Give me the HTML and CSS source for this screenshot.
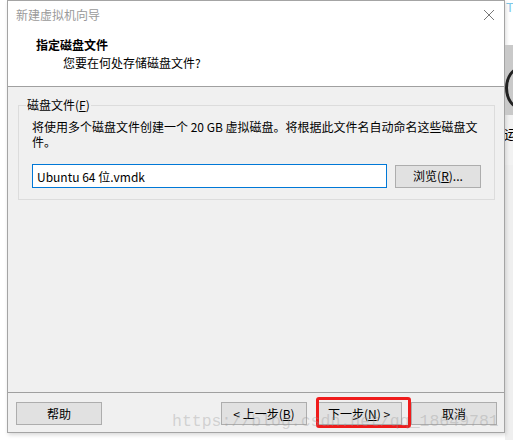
FILE: index.html
```html
<!DOCTYPE html>
<html lang="zh-CN">
<head>
    <meta charset="UTF-8">
    <title>新建虚拟机向导</title>
    <link rel="stylesheet" href="styles.css">
</head>
<body>
    <div class="wizard">
        <div class="title-bar">
            <span class="title-text">新建虚拟机向导</span>
            <svg class="close-icon" width="12" height="12" viewBox="0 0 12 12">
                <path d="M1 1 L11 11 M11 1 L1 11" stroke="#777" stroke-width="1" fill="none"/>
            </svg>
        </div>
        <div class="wizard-header">
            <div class="header-title">指定磁盘文件</div>
            <div class="header-sub">您要在何处存储磁盘文件?</div>
        </div>

        <div class="wizard-body">
            <fieldset class="group">
                <legend>磁盘文件(<u>F</u>)</legend>
                <p class="desc">将使用多个磁盘文件创建一个 20 GB 虚拟磁盘。将根据此文件名自动命名这些磁盘文<br>件。</p>
                <div class="file-row">
                    <input class="file-input" type="text" value="Ubuntu 64 位.vmdk">
                    <button class="btn">浏览(<u>R</u>)...</button>
                </div>
            </fieldset>
        </div>

        <div class="wizard-footer">
            <button class="btn">帮助</button>
            <div class="nav-buttons">
                <button class="btn">&lt; 上一步(<u>B</u>)</button>
                <button class="btn">下一步(<u>N</u>) &gt;</button>
                <button class="btn">取消</button>
            </div>
            <!-- annotation drawn over the screenshot -->
            <div class="highlight"></div>
            <div class="watermark">https://blog.csdn.net/qq_18649781</div>
        </div>
    </div>

    <div class="side-strip">
        <div class="strip-top">T</div>
        <div class="strip-dark"><span class="strip-ring"></span></div>
        <div class="strip-text">运</div>
        <div class="strip-rest"></div>
    </div>
</body>
</html>
```

FILE: styles.css
```css
body {
    margin: 0;
    height: 440px;
    display: flex;
    align-items: flex-start;
    padding-left: 7px;
    background: #fff;
    font-family: "Noto Sans CJK SC", "Noto Sans", sans-serif;
    font-size: 12px;
    color: #000;
    overflow: hidden;
}

.wizard {
    width: 496px;
    height: 431px;
    border: 1px solid #a4a4a4;
    display: flex;
    flex-direction: column;
    background: #f0f0f0;
    box-shadow: 1px 2px 4px rgba(0, 0, 0, 0.15);
    position: relative;
}

.title-bar {
    height: 28px;
    line-height: 28px;
    background: #fff;
    display: flex;
    justify-content: space-between;
    align-items: center;
    padding: 0 9px 0 8px;
}

.title-text {
    color: #9a9a9a;
}

.wizard-header {
    height: 58px;
    background: #fff;
    border-bottom: 1px solid #a0a0a0;
    padding: 7px 0 0 28px;
    box-sizing: border-box;
    line-height: 18px;
}

.header-title {
    font-weight: bold;
}

.header-sub {
    padding-left: 27px;
}

.wizard-body {
    flex: 1;
    padding: 10px 9px 0 10px;
}

.group {
    margin: 0;
    border: 1px solid #dcdcdc;
    padding: 0 13px 11px 13px;
}

.group legend {
    margin-left: -6px;
    padding: 0 1px;
    line-height: 16px;
}

.desc {
    margin: 6px 0 0;
    line-height: 15px;
    white-space: nowrap;
}

.file-row {
    display: flex;
    align-items: center;
    gap: 8px;
    margin-top: 15px;
}

.file-input {
    flex: 1;
    height: 24px;
    box-sizing: border-box;
    border: 1px solid #0078d7;
    padding: 0 4px;
    font: inherit;
    background: #fff;
    outline: none;
}

.btn {
    width: 86px;
    height: 23px;
    box-sizing: border-box;
    border: 1px solid #adadad;
    background: #e1e1e1;
    font: inherit;
    color: #000;
    padding: 0;
    line-height: 20px;
}

.btn u {
    text-decoration: underline;
}

.wizard-footer {
    height: 40px;
    border-top: 1px solid #a0a0a0;
    box-sizing: border-box;
    display: flex;
    justify-content: space-between;
    align-items: flex-start;
    padding: 9px 7px 0 8px;
    position: relative;
}

.nav-buttons {
    display: flex;
    gap: 9px;
}

.highlight {
    position: absolute;
    left: 308px;
    top: 4px;
    width: 89px;
    height: 25px;
    border: 3px solid #f01c1c;
    border-radius: 3px;
    pointer-events: none;
}

.watermark {
    position: absolute;
    left: 164px;
    top: 19px;
    font-family: "Liberation Mono", monospace;
    font-size: 16.5px;
    color: rgba(150, 150, 150, 0.35);
    white-space: nowrap;
    pointer-events: none;
}

.side-strip {
    width: 8px;
    height: 440px;
    display: flex;
    flex-direction: column;
    overflow: hidden;
}

.strip-top {
    height: 45px;
    background: #fff;
    color: #7ec8e8;
    font-family: "Liberation Sans", sans-serif;
    font-size: 13px;
    line-height: 16px;
    padding-left: 1px;
}

.strip-dark {
    height: 70px;
    background: #c9c9c9;
    position: relative;
}

.strip-ring {
    position: absolute;
    left: 0;
    top: 22px;
    width: 24px;
    height: 36px;
    border: 3px solid #222;
    border-radius: 50%;
}

.strip-text {
    height: 50px;
    background: #f2f2f2;
    font-size: 13px;
    line-height: 38px;
    margin-left: -1px;
}

.strip-rest {
    flex: 1;
    background: #efefef;
}
```
